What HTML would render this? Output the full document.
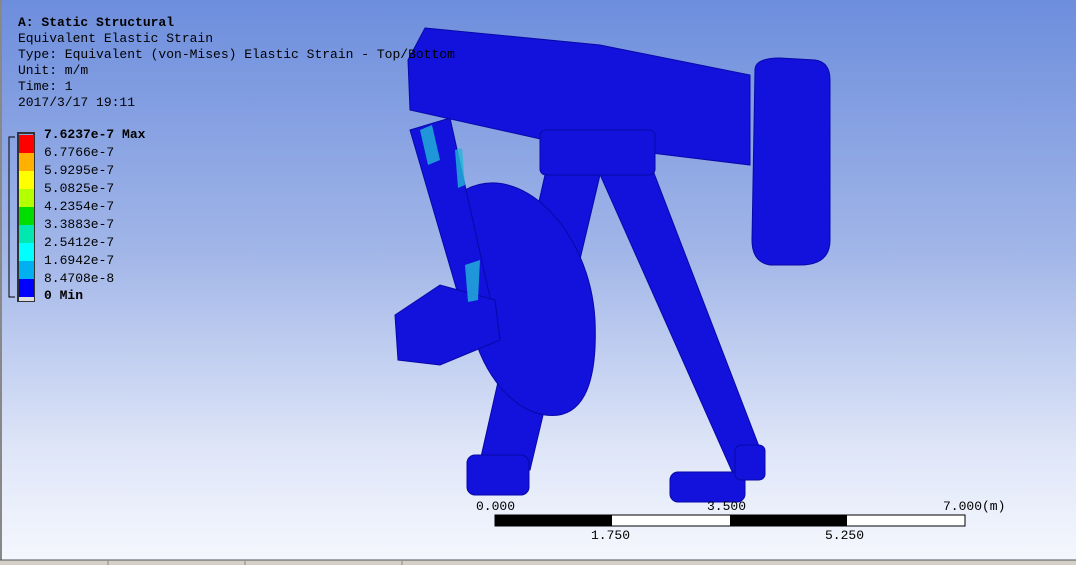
<!DOCTYPE html>
<html><head><meta charset="utf-8"><style>
body{margin:0;width:1076px;height:565px;overflow:hidden;position:relative;font-family:"Liberation Mono","Noto Sans CJK SC",monospace;background:linear-gradient(#6d8edd 0%,#a2b6e8 45%,#dfe6f8 80%,#f6f8fe 100%);}
.t{position:absolute;left:18px;font-size:13px;line-height:16px;color:#000;white-space:pre}
.leg{position:absolute;left:44px;font-size:13px;line-height:18px;color:#000;white-space:pre}
</style></head><body>
<div style="position:absolute;left:0;top:0;width:2px;height:565px;background:#888"></div>
<svg width="1076" height="565" style="position:absolute;left:0;top:0">
<g fill="#1212dc" stroke="#0808a8" stroke-width="1">
<polygon points="598,170 652,168 765,462 735,478"/>
<polygon points="545,175 600,175 530,470 478,470"/>
<path d="M465,190 C520,160 590,230 595,320 C598,390 580,420 545,415 C510,410 480,370 470,320 Z"/>
<polygon points="410,130 450,118 495,320 470,335"/>
<path d="M395,315 L440,285 L495,300 L500,340 L440,365 L398,360 Z"/>
<polygon points="425,28 600,45 750,75 750,165 545,140 410,110 408,60"/>
<rect x="540" y="130" width="115" height="45" rx="6"/>
<path d="M755,70 Q755,58 780,58 L815,60 Q830,62 830,80 L830,240 Q830,265 800,265 L770,265 Q752,262 752,240 Z"/>
<rect x="467" y="455" width="62" height="40" rx="8"/>
<rect x="670" y="472" width="75" height="30" rx="8"/>
<rect x="735" y="445" width="30" height="35" rx="6"/>
</g>
<g fill="#22b8d8" opacity="0.8"><polygon points="420,130 432,125 440,160 428,165"/><polygon points="465,265 480,260 478,300 468,302"/><polygon points="455,150 462,148 465,185 458,188"/></g>
<rect x="18" y="133" width="16" height="168" fill="none" stroke="#333" stroke-width="2"/>
<rect x="19" y="135" width="15" height="18" fill="#ff0000"/>
<rect x="19" y="153" width="15" height="18" fill="#ffb000"/>
<rect x="19" y="171" width="15" height="18" fill="#ffff00"/>
<rect x="19" y="189" width="15" height="18" fill="#b4ff00"/>
<rect x="19" y="207" width="15" height="18" fill="#00dd00"/>
<rect x="19" y="225" width="15" height="18" fill="#00e8b0"/>
<rect x="19" y="243" width="15" height="18" fill="#00ffff"/>
<rect x="19" y="261" width="15" height="18" fill="#00b0f0"/>
<rect x="19" y="279" width="15" height="18" fill="#0000ff"/>
<rect x="19" y="297" width="15" height="4" fill="#ddd"/>
<path d="M15,137 H9 V297 H15" fill="none" stroke="#000"/>
<rect x="495" y="515" width="470" height="11" fill="#fff" stroke="#000"/>
<rect x="495" y="515" width="117" height="11" fill="#000"/>
<rect x="730" y="515" width="117" height="11" fill="#000"/>
<rect x="0" y="560" width="1076" height="5" fill="#d4d0c8"/>
<line x1="0" y1="560" x2="1076" y2="560" stroke="#555"/>
<line x1="108" y1="561" x2="108" y2="565" stroke="#888"/><line x1="245" y1="561" x2="245" y2="565" stroke="#888"/><line x1="402" y1="561" x2="402" y2="565" stroke="#888"/>
</svg>
<div class="t" style="top:15px;font-weight:bold">A: Static Structural</div>
<div class="t" style="top:31px">Equivalent Elastic Strain</div>
<div class="t" style="top:47px">Type: Equivalent (von-Mises) Elastic Strain - Top/Bottom</div>
<div class="t" style="top:63px">Unit: m/m</div>
<div class="t" style="top:79px">Time: 1</div>
<div class="t" style="top:95px">2017/3/17 19:11</div>
<div class="t" style="top:127px;font-weight:bold;left:44px">7.6237e-7 Max</div>
<div class="leg" style="top:144px">6.7766e-7</div>
<div class="leg" style="top:162px">5.9295e-7</div>
<div class="leg" style="top:180px">5.0825e-7</div>
<div class="leg" style="top:198px">4.2354e-7</div>
<div class="leg" style="top:216px">3.3883e-7</div>
<div class="leg" style="top:234px">2.5412e-7</div>
<div class="leg" style="top:252px">1.6942e-7</div>
<div class="leg" style="top:270px">8.4708e-8</div>
<div class="leg" style="top:287px;font-weight:bold">0 Min</div>
<div class="t" style="top:499px;left:476px">0.000</div>
<div class="t" style="top:499px;left:707px">3.500</div>
<div class="t" style="top:499px;left:943px">7.000(m)</div>
<div class="t" style="top:528px;left:591px">1.750</div>
<div class="t" style="top:528px;left:825px">5.250</div>
</body></html>
